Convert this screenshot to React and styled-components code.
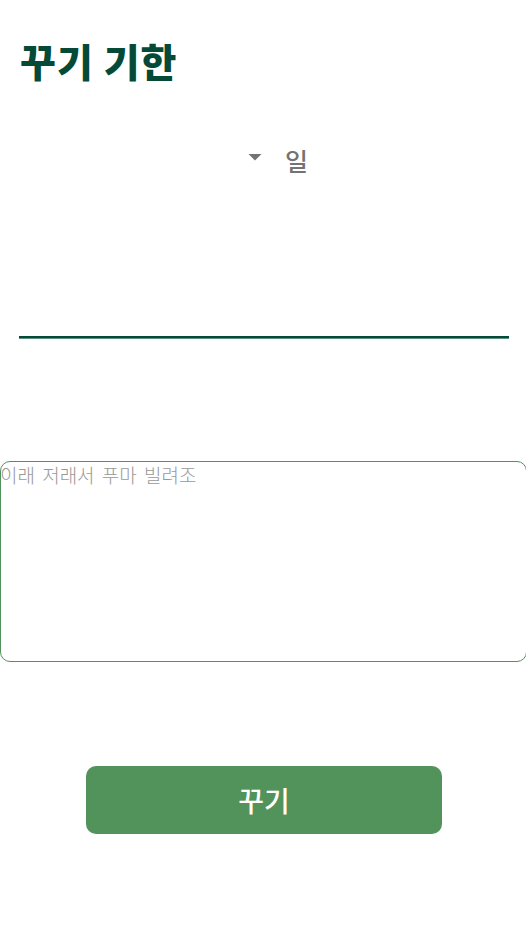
import React from "react";
import styled, { createGlobalStyle } from "styled-components";

const Global = createGlobalStyle`
  * { box-sizing: border-box; }
  body { margin: 0; background: #fff; font-family: "Noto Sans CJK KR", sans-serif; }
`;
const Screen = styled.main`
  width: 526px;
  height: 938px;
  overflow: hidden;
  display: flex;
  flex-direction: column;
`;
const Title = styled.h1`
  margin: 35px 0 0 20px;
  height: 50px;
  line-height: 50px;
  font-size: 39px;
  font-weight: 900;
  letter-spacing: 1px;
  color: #044a37;
  white-space: nowrap;
`;
const DayPicker = styled.div`
  display: flex;
  align-items: flex-start;
  height: 40px;
  margin: 55px 0 0 248px;
  gap: 23px;
`;
const Arrow = styled.svg`
  margin-top: 14px;
  fill: #737373;
`;
const Unit = styled.span`
  font-size: 25px;
  font-weight: 500;
  line-height: 40px;
  color: #737373;
`;
const Divider = styled.hr`
  margin: 156px 17px 0 19px;
  width: 490px;
  height: 3px;
  border: 0;
  border-bottom: 1px solid #5b8f80;
  background: #044a37;
`;
const Reason = styled.textarea`
  display: block;
  width: 527px;
  flex: none;
  height: 201px;
  margin: 122px 0 0;
  padding: 0;
  border: 1px solid #52925b;
  border-radius: 10px;
  resize: none;
  outline: none;
  background: #fff;
  font: 300 19px/26px "Noto Sans CJK KR", sans-serif;
  word-spacing: 3px;
  text-indent: -1px;
  &::placeholder { color: #989898; opacity: 1; }
`;
const Submit = styled.button`
  width: 356px;
  height: 68px;
  margin: 104px 0 0 86px;
  padding: 0;
  border: 0;
  border-radius: 10px;
  background: #52925b;
  color: #fff;
  font: 500 28px/68px "Noto Sans CJK KR", sans-serif;
`;

export default function App() {
  return (
    <Screen>
      <Global />
      <Title>꾸기 기한</Title>
      <DayPicker>
        <Arrow width="14" height="7" viewBox="0 0 14 7"><path d="M0.5 0h13L7 6.5z" /></Arrow>
        <Unit>일</Unit>
      </DayPicker>
      <Divider />
      <Reason placeholder="이래 저래서 푸마 빌려조" />
      <Submit>꾸기</Submit>
    </Screen>
  );
}
